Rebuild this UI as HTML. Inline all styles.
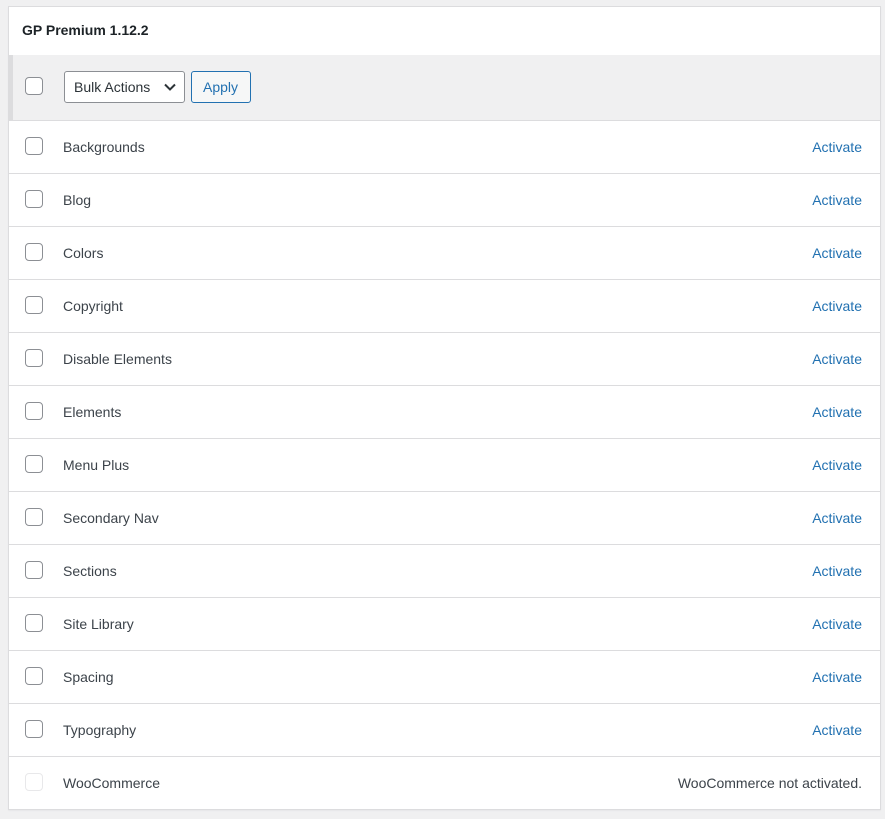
<!DOCTYPE html>
<html><head><style>
*{box-sizing:border-box;margin:0;padding:0}
body{width:885px;height:819px;background:#f0f0f1;font-family:"Liberation Sans",sans-serif;font-size:14px;color:#3c434a;position:relative;overflow:hidden}
.box{position:absolute;left:8px;top:6px;width:873px;height:804px;background:#fff;border:1px solid #dcdcde;box-shadow:0 1px 1px rgba(0,0,0,.04)}
.hd{height:48px;padding:15px 0 0 13px;font-weight:600;font-size:14px;color:#1d2327}
.tb{height:66px;background:#f0f0f1;border-left:4px solid #dcdcde;border-bottom:1px solid #dcdcde;position:relative}
.cb{position:absolute;width:18px;height:18px;border:1px solid #8c8f94;border-radius:4px;background:#fff}
.sel{position:absolute;left:51px;top:16px;width:121px;height:32px;border:1px solid #8c8f94;border-radius:3px;background:#fff;padding:7px 0 0 9px;font-size:14px;color:#2c3338}
.sel svg{position:absolute;right:8px;top:11px}
.ap{position:absolute;left:178px;top:16px;width:60px;height:32px;border:1px solid #2271b1;border-radius:3px;background:#f6f7f7;color:#2271b1;padding:7px 0 0 11px}
.row{height:53px;border-bottom:1px solid #dcdcde;position:relative}
.row:last-child{border-bottom:none}
.row .cb{left:16px;top:16px}
.row .n{position:absolute;left:54px;top:18px}
.row .a{position:absolute;right:18px;top:18px;color:#2271b1}
</style></head><body>
<div class="box">
<div class="hd">GP Premium 1.12.2</div>
<div class="tb"><div class="cb" style="left:12px;top:22px"></div>
<div class="sel">Bulk Actions<svg width="12" height="8" viewBox="0 0 12 8"><path d="M1 1.5l5 5 5-5" fill="none" stroke="#2c3338" stroke-width="2"/></svg></div>
<div class="ap">Apply</div></div>
<div class="row"><div class="cb"></div><span class="n">Backgrounds</span><span class="a">Activate</span></div>
<div class="row"><div class="cb"></div><span class="n">Blog</span><span class="a">Activate</span></div>
<div class="row"><div class="cb"></div><span class="n">Colors</span><span class="a">Activate</span></div>
<div class="row"><div class="cb"></div><span class="n">Copyright</span><span class="a">Activate</span></div>
<div class="row"><div class="cb"></div><span class="n">Disable Elements</span><span class="a">Activate</span></div>
<div class="row"><div class="cb"></div><span class="n">Elements</span><span class="a">Activate</span></div>
<div class="row"><div class="cb"></div><span class="n">Menu Plus</span><span class="a">Activate</span></div>
<div class="row"><div class="cb"></div><span class="n">Secondary Nav</span><span class="a">Activate</span></div>
<div class="row"><div class="cb"></div><span class="n">Sections</span><span class="a">Activate</span></div>
<div class="row"><div class="cb"></div><span class="n">Site Library</span><span class="a">Activate</span></div>
<div class="row"><div class="cb"></div><span class="n">Spacing</span><span class="a">Activate</span></div>
<div class="row"><div class="cb"></div><span class="n">Typography</span><span class="a">Activate</span></div>
<div class="row"><div class="cb" style="border-color:#e8e8ea"></div><span class="n">WooCommerce</span><span class="a" style="color:#3c434a">WooCommerce not activated.</span></div>
</div>
</body></html>
